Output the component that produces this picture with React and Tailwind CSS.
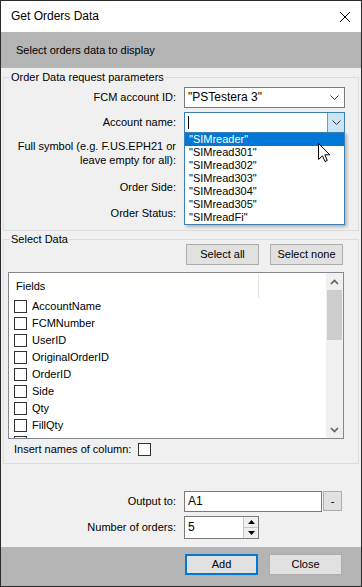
import React from "react";

function Chevron({ color = "#333" }) {
  return (
    <svg width="9" height="5" viewBox="0 0 9 5" className="block">
      <polyline points="0.5,0.5 4.5,4.5 8.5,0.5" fill="none" stroke={color} strokeWidth="1" />
    </svg>
  );
}

function ScrollArrow({ up }) {
  return (
    <svg width="9" height="6" viewBox="0 0 9 6" className="block">
      <polyline
        points={up ? "1,5 4.5,1.5 8,5" : "1,1 4.5,4.5 8,1"}
        fill="none"
        stroke="#606060"
        strokeWidth="1.6"
      />
    </svg>
  );
}

function Check() {
  return <div className="w-[13px] h-[13px] shrink-0 border border-[#333] bg-white" />;
}

const items = ['"SIMreader"', '"SIMread301"', '"SIMread302"', '"SIMread303"', '"SIMread304"', '"SIMread305"', '"SIMreadFi"'];
const fields = ["AccountName", "FCMNumber", "UserID", "OriginalOrderID", "OrderID", "Side", "Qty", "FillQty"];

export default function App() {
  return (
    <div className="relative w-[362px] h-[587px] border border-[#2b2b2b] flex flex-col bg-[#f0f0f0] font-['Liberation_Sans',Arial,sans-serif] text-[11px] leading-[13px] text-black overflow-hidden">
      {/* Title bar */}
      <div className="h-[31px] shrink-0 bg-white flex items-center justify-between pl-[10px] pr-[11px]">
        <span className="text-[12px]">Get Orders Data</span>
        <svg width="10" height="10" viewBox="0 0 10 10" className="block">
          <path d="M0 0L10 10M10 0L0 10" stroke="#000" strokeWidth="1" />
        </svg>
      </div>

      {/* Header band */}
      <div className="h-[36px] shrink-0 bg-[#b4b4b4] flex items-center pl-[15px]">
        Select orders data to display
      </div>

      {/* Body */}
      <div className="h-[479px] shrink-0 flex flex-col">
        {/* Group 1 */}
        <fieldset className="mx-[2px] mt-[3px] border border-[#dcdcdc] pt-[4px] pb-[7px]">
          <legend className="ml-[6px] px-[1px] leading-[12px]">Order Data request parameters</legend>

          <div className="flex items-center gap-[8px] h-[21px]">
            <div className="w-[172px] text-right">FCM account ID:</div>
            <div className="w-[161px] h-[21px] bg-white border border-[#7a7a7a] flex items-center">
              <span className="pl-[3px] text-[12px] flex-1">"PSTestera 3"</span>
              <div className="pr-[5px]">
                <Chevron />
              </div>
            </div>
          </div>

          <div className="flex items-center gap-[8px] h-[21px] mt-[4px]">
            <div className="w-[172px] text-right">Account name:</div>
            <div className="relative w-[161px] h-[21px] bg-white border border-[#3c7fb1] flex">
              <div className="flex-1 flex items-center pl-[3px]">
                <div className="w-px h-[13px] bg-black" />
              </div>
              <div className="w-[17px] bg-[#cce4f7] border-l border-[#569de5] flex items-center justify-center">
                <Chevron />
              </div>
              {/* Dropdown list */}
              <div className="absolute left-[-1px] top-[19px] w-[161px] bg-white border border-[#3c7fb1] shadow-[2px_2px_3px_rgba(0,0,0,0.25)] z-10">
                {items.map((it, i) => (
                  <div
                    key={it}
                    className={
                      i === 0
                        ? "h-[13px] pl-[4px] bg-[#0078d7] text-white leading-[13px]"
                        : "h-[13px] pl-[4px] leading-[13px]"
                    }
                  >
                    {it}
                  </div>
                ))}
              </div>
            </div>
          </div>

          <div className="flex items-center gap-[8px] h-[28px] mt-[6px]">
            <div className="w-[172px] text-right leading-[14px]">
              Full symbol (e.g. F.US.EPH21 or
              <br />
              leave empty for all):
            </div>
          </div>

          <div className="flex items-center gap-[8px] h-[20px] mt-[10px]">
            <div className="w-[172px] text-right">Order Side:</div>
          </div>

          <div className="flex items-center gap-[8px] h-[20px] mt-[6px]">
            <div className="w-[172px] text-right">Order Status:</div>
          </div>
        </fieldset>

        {/* Group 2 */}
        <fieldset className="mx-[2px] mt-[3px] border border-[#dcdcdc] pb-[7px]">
          <legend className="ml-[6px] px-[1px] leading-[10px]">Select Data</legend>

          <div className="flex justify-end gap-[11px] pr-[15px] h-[21px]">
            <button className="w-[73px] h-[21px] bg-[#e1e1e1] border border-[#adadad]">Select all</button>
            <button className="w-[73px] h-[21px] bg-[#e1e1e1] border border-[#adadad]">Select none</button>
          </div>

          <div className="ml-[4px] mt-[7px] w-[336px] h-[167px] border border-[#828790] bg-white flex overflow-hidden">
            <div className="flex-1 flex flex-col overflow-hidden">
              <div className="h-[25px] shrink-0 flex">
                <div className="w-[250px] h-[24px] mt-[1px] border-r border-[#e5e5e5] flex items-center pl-[7px]">
                  Fields
                </div>
              </div>
              {fields.map((f) => (
                <div key={f} className="h-[17px] shrink-0 flex items-center gap-[5px] pl-[5px]">
                  <Check />
                  <span>{f}</span>
                </div>
              ))}
              <div className="h-[17px] shrink-0 flex items-center pl-[5px]">
                <Check />
              </div>
            </div>
            <div className="w-[17px] shrink-0 bg-[#f0f0f0] flex flex-col">
              <div className="h-[17px] flex items-center justify-center">
                <ScrollArrow up />
              </div>
              <div className="mx-[1px] h-[50px] bg-[#cdcdcd]" />
              <div className="flex-1" />
              <div className="h-[17px] flex items-center justify-center">
                <ScrollArrow />
              </div>
            </div>
          </div>

          <div className="flex items-center gap-[7px] pl-[10px] mt-[4px] h-[13px]">
            <span>Insert names of column:</span>
            <Check />
          </div>
        </fieldset>

        {/* Output to */}
        <div className="flex items-center gap-[8px] h-[21px] mt-[27px]">
          <div className="w-[175px] text-right">Output to:</div>
          <div className="flex items-start">
            <div className="w-[138px] h-[21px] bg-white border border-[#7a7a7a] flex items-center pl-[3px] text-[12px]">
              A1
            </div>
            <button className="ml-[1px] w-[19px] h-[20px] bg-[#e1e1e1] border border-[#adadad] leading-[18px]">
              -
            </button>
          </div>
        </div>

        {/* Number of orders */}
        <div className="flex items-center gap-[8px] h-[23px] mt-[4px]">
          <div className="w-[175px] text-right">Number of orders:</div>
          <div className="w-[75px] h-[23px] bg-white border border-[#7a7a7a] flex">
            <div className="flex-1 flex items-center pl-[3px] text-[12px]">5</div>
            <div className="w-[15px] flex flex-col border-l border-[#c8c8c8] bg-[#f0f0f0]">
              <div className="flex-1 flex items-center justify-center border-b border-[#c8c8c8]">
                <svg width="7" height="4" viewBox="0 0 7 4" className="block">
                  <path d="M0 4L3.5 0L7 4Z" fill="#000" />
                </svg>
              </div>
              <div className="flex-1 flex items-center justify-center">
                <svg width="7" height="4" viewBox="0 0 7 4" className="block">
                  <path d="M0 0L3.5 4L7 0Z" fill="#000" />
                </svg>
              </div>
            </div>
          </div>
        </div>
      </div>

      {/* Footer */}
      <div className="h-[39px] shrink-0 bg-[#b4b4b4] flex justify-end items-start gap-[11px] pt-[7px] pr-[19px]">
        <button className="w-[73px] h-[21px] bg-[#e1e1e1] border-2 border-[#0078d7] leading-[15px]">Add</button>
        <button className="w-[73px] h-[21px] bg-[#e1e1e1] border border-[#adadad]">Close</button>
      </div>

      {/* Mouse cursor */}
      <svg width="13" height="20" viewBox="0 0 13 20" className="absolute left-[317px] top-[142px] z-20">
        <path
          d="M0.5 0.5L0.5 16.5L4.5 12.8L7 18.5L9.3 17.5L6.9 11.8L11.8 11.8Z"
          fill="#fff"
          stroke="#000"
          strokeWidth="1"
          strokeLinejoin="miter"
        />
      </svg>
    </div>
  );
}
